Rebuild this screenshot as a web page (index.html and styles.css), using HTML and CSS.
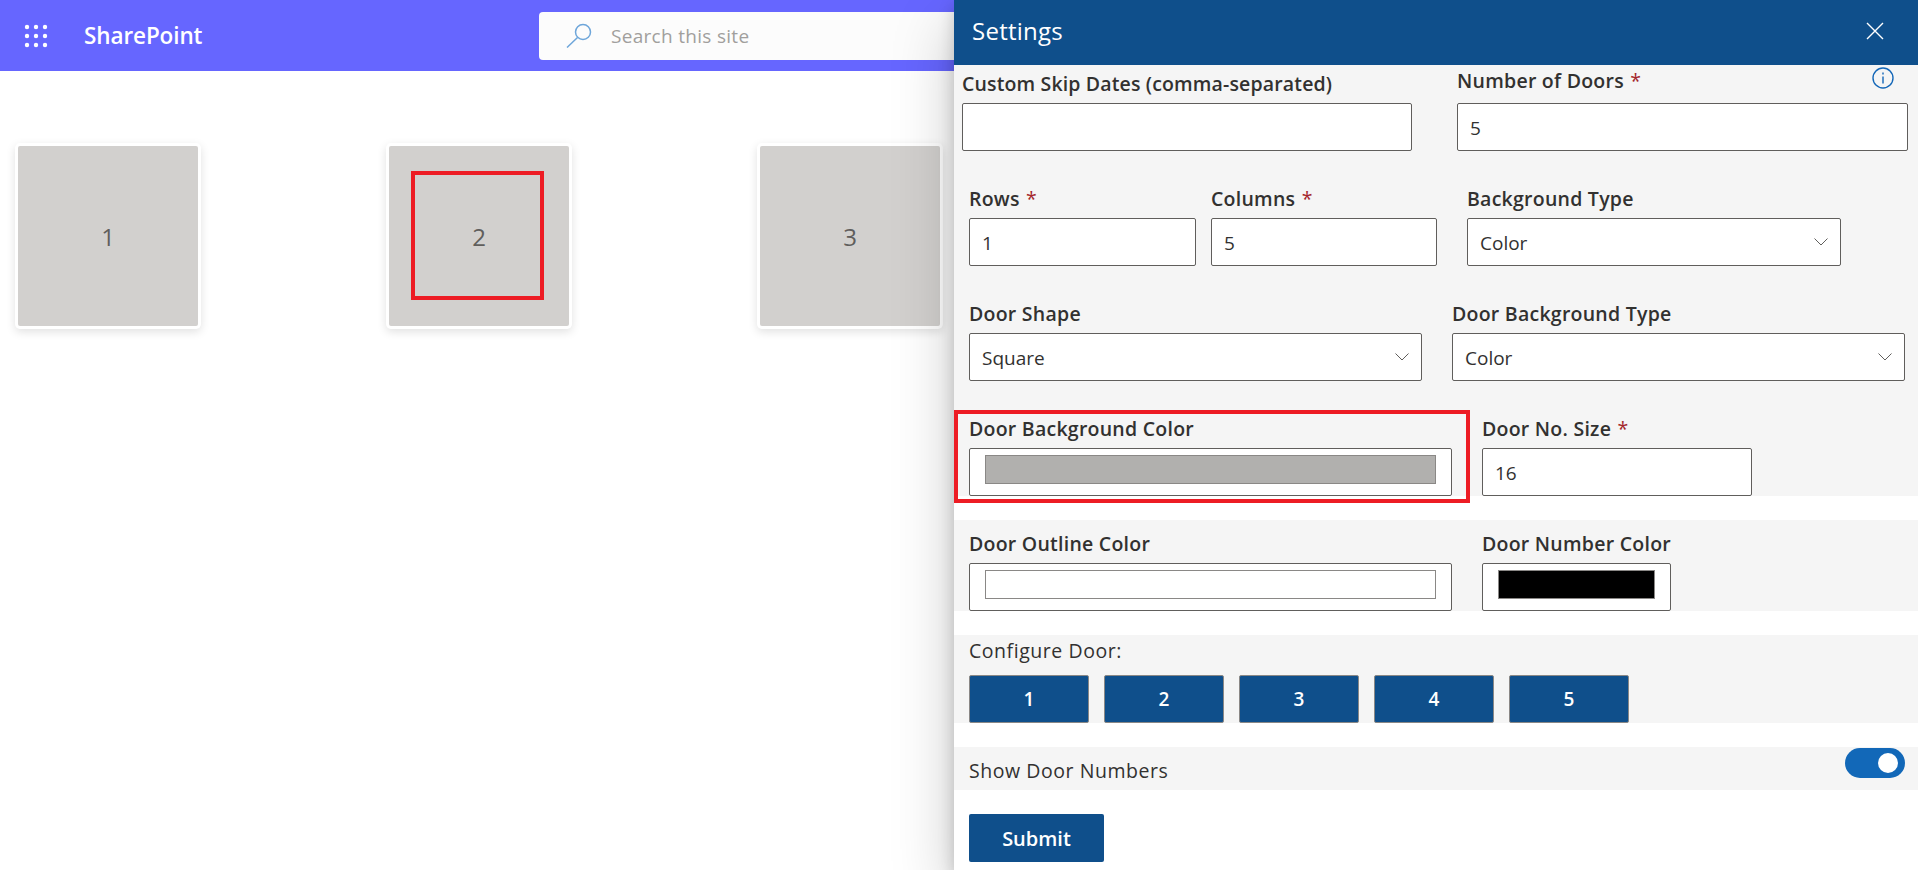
FILE: index.html
```html
<!DOCTYPE html>
<html>
<head>
    <title>SharePoint - Settings</title>
    <link rel="stylesheet" href="styles.css">
</head>
<body>
    <header class="suitebar">
        <svg class="waffle" width="24" height="24" viewBox="0 0 24 24" fill="#fff">
            <circle cx="3" cy="3" r="2.2"/><circle cx="12" cy="3" r="2.2"/><circle cx="21" cy="3" r="2.2"/>
            <circle cx="3" cy="12" r="2.2"/><circle cx="12" cy="12" r="2.2"/><circle cx="21" cy="12" r="2.2"/>
            <circle cx="3" cy="21" r="2.2"/><circle cx="12" cy="21" r="2.2"/><circle cx="21" cy="21" r="2.2"/>
        </svg>
        <span class="brand">SharePoint</span>
        <div class="search">
            <svg class="search-icon" width="26" height="25" viewBox="0 0 26 25" fill="none" stroke="#6ea6da" stroke-width="1.5">
                <circle cx="17" cy="9" r="7.5"/>
                <path d="M11.5 14.5 1 24.5"/>
            </svg>
            <span>Search this site</span>
        </div>
    </header>

    <main class="doors">
        <div class="door">1</div>
        <div class="door door-marked">2</div>
        <div class="door">3</div>
        <div class="door">4</div>
        <div class="door">5</div>
    </main>

    <aside class="panel">
        <div class="panel-head">
            <span class="panel-title">Settings</span>
            <svg width="18" height="18" viewBox="0 0 18 18" stroke="#fff" stroke-width="1.4">
                <path d="M1 1l16 16M17 1 1 17"/>
            </svg>
        </div>

        <section class="block block-first">
            <div class="row row-top">
                <div class="field w-skip">
                    <label class="label label-skip">Custom Skip Dates (comma-separated)</label>
                    <div class="input"></div>
                </div>
                <div class="field w-doors">
                    <label class="label label-up">Number of Doors <span class="req">*</span></label>
                    <div class="input">5</div>
                    <svg class="info" width="22" height="22" viewBox="0 0 22 22" fill="none" stroke="#1467b8" stroke-width="1.4">
                        <circle cx="11" cy="11" r="10"/>
                        <path d="M11 9.5v7M11 5.5v2"/>
                    </svg>
                </div>
            </div>
            <div class="row">
                <div class="field w-rows">
                    <label class="label">Rows <span class="req">*</span></label>
                    <div class="input">1</div>
                </div>
                <div class="field w-cols">
                    <label class="label">Columns <span class="req">*</span></label>
                    <div class="input">5</div>
                </div>
                <div class="field w-bgtype">
                    <label class="label">Background Type</label>
                    <div class="input select">Color
                        <svg width="14" height="8" viewBox="0 0 14 8" fill="none" stroke="#605e5c"><path d="M.5.5 7 7 13.5.5"/></svg>
                    </div>
                </div>
            </div>
            <div class="row">
                <div class="field w-half">
                    <label class="label">Door Shape</label>
                    <div class="input select">Square
                        <svg width="14" height="8" viewBox="0 0 14 8" fill="none" stroke="#605e5c"><path d="M.5.5 7 7 13.5.5"/></svg>
                    </div>
                </div>
                <div class="field w-half">
                    <label class="label">Door Background Type</label>
                    <div class="input select">Color
                        <svg width="14" height="8" viewBox="0 0 14 8" fill="none" stroke="#605e5c"><path d="M.5.5 7 7 13.5.5"/></svg>
                    </div>
                </div>
            </div>
            <div class="row row-wide">
                <div class="field w-color field-marked">
                    <label class="label">Door Background Color</label>
                    <div class="input swatch-box"><div class="swatch swatch-grey"></div></div>
                </div>
                <div class="field w-size">
                    <label class="label">Door No. Size <span class="req">*</span></label>
                    <div class="input">16</div>
                </div>
            </div>
        </section>

        <section class="block block-colors">
            <div class="row row-wide row-flush">
                <div class="field w-color">
                    <label class="label">Door Outline Color</label>
                    <div class="input swatch-box"><div class="swatch swatch-white"></div></div>
                </div>
                <div class="field w-numcolor">
                    <label class="label">Door Number Color</label>
                    <div class="input swatch-box"><div class="swatch swatch-black"></div></div>
                </div>
            </div>
        </section>

        <section class="block block-config">
            <div class="label label-tight">Configure Door:</div>
            <div class="door-btns">
                <button class="door-btn">1</button>
                <button class="door-btn">2</button>
                <button class="door-btn">3</button>
                <button class="door-btn">4</button>
                <button class="door-btn">5</button>
            </div>
        </section>

        <section class="block block-toggle">
            <span class="toggle-label">Show Door Numbers</span>
            <span class="toggle"><span class="knob"></span></span>
        </section>

        <button class="submit">Submit</button>
    </aside>
</body>
</html>
```

FILE: styles.css
```css
*, *::after {
    box-sizing: border-box;
}
html, body {
    height: 100%;
}
body {
    margin: 0;
    overflow: hidden;
    background-color: #fff;
    font-family: "Open Sans", "Noto Sans", Arial, sans-serif;
    color: #323130;
}

/* top bar */
.suitebar {
    display: flex;
    align-items: center;
    height: 71px;
    padding-left: 24px;
    background-color: #6666ff;
}
.waffle {
    flex: none;
}
.brand {
    flex: none;
    width: 117px;
    margin-left: 36px;
    color: #fff;
    font-size: 22.5px;
    font-weight: 600;
    letter-spacing: -0.1px;
    white-space: nowrap;
}
.search {
    display: flex;
    align-items: center;
    width: 840px;
    height: 48px;
    margin-left: 338px;
    padding-left: 27px;
    background-color: #fcfcfc;
    border-radius: 4px;
    color: #a19f9d;
    font-size: 19px;
    letter-spacing: 0.3px;
}
.search-icon {
    margin-right: 19px;
}

/* doors */
.doors {
    display: flex;
    gap: 191px;
    padding: 75px 0 0 18px;
}
.door {
    display: flex;
    flex: none;
    align-items: center;
    justify-content: center;
    position: relative;
    width: 180px;
    height: 180px;
    background-color: #d2d0ce;
    border-radius: 2px;
    box-shadow: 0 0 0 3px #fff, 0 3px 10px 3px rgba(0, 0, 0, 0.12);
    color: #605e5c;
    font-size: 24px;
}
.door-marked::after {
    content: "";
    position: absolute;
    left: 22px;
    top: 25px;
    width: 133px;
    height: 129px;
    border: 4px solid #ed1c24;
}

/* settings panel */
.panel {
    position: absolute;
    top: 0;
    right: 0;
    width: 964px;
    height: 100%;
    background-color: #fff;
    box-shadow: 0 25px 58px rgba(0, 0, 0, 0.22), 0 5px 15px rgba(0, 0, 0, 0.18);
}
.panel-head {
    display: flex;
    align-items: center;
    justify-content: space-between;
    height: 65px;
    padding: 0 34px 4px 18px;
    background-color: #0f4f8b;
    color: #fff;
}
.panel-title {
    font-size: 24px;
    letter-spacing: 0.25px;
}
.block {
    background-color: #f5f5f5;
}
.block-first {
    height: 431px;
    padding: 7px 10px 0 15px;
}
.block-colors {
    height: 91px;
    margin-top: 24px;
    padding: 12px 0 0 15px;
}
.block-config {
    height: 88px;
    margin-top: 24px;
    padding: 4px 0 0 15px;
}
.block-toggle {
    display: flex;
    justify-content: space-between;
    position: relative;
    height: 43px;
    margin-top: 24px;
    padding: 12px 13px 0 15px;
}

.row {
    display: flex;
    margin-top: 36px;
}
.row-top {
    gap: 45px;
    margin: 0 0 0 -7px;
}
.row-wide {
    gap: 30px;
}
.row-flush {
    margin-top: 0;
}
.field {
    position: relative;
    flex: none;
}
.label {
    display: block;
    height: 24px;
    margin-bottom: 7px;
    font-size: 19.5px;
    font-weight: 550;
    line-height: 24px;
    letter-spacing: 0.25px;
    white-space: nowrap;
}
.label-skip {
    letter-spacing: 0.15px;
}
.label-up {
    position: relative;
    top: -3px;
}
.label-tight {
    margin-bottom: 12px;
    font-weight: 500;
    letter-spacing: 0.55px;
}
.req {
    margin-left: 1px;
    color: #a4262c;
    font-weight: 400;
}
.input {
    display: flex;
    align-items: center;
    justify-content: space-between;
    height: 48px;
    padding: 1px 13px 0 12px;
    background-color: #fff;
    border: 1px solid #605e5c;
    border-radius: 2px;
    font-size: 19px;
}
.select svg {
    flex: none;
    margin: -1px -1px 0 0;
}
.swatch-box {
    padding: 0 15px 5px;
}
.swatch {
    width: 100%;
    height: 29px;
    border: 1px solid #8a8886;
}
.swatch-grey {
    background-color: #b1b0ae;
}
.swatch-white {
    background-color: #fff;
}
.swatch-black {
    background-color: #000;
}
.info {
    position: absolute;
    top: -5px;
    right: 14px;
}

.w-skip { width: 450px; }
.w-doors { width: 451px; }
.w-rows { width: 227px; margin-right: 15px; }
.w-cols { width: 226px; margin-right: 30px; }
.w-bgtype { width: 374px; }
.w-half { width: 453px; margin-right: 30px; }
.w-half + .w-half { width: 453px; margin-right: 0; }
.w-color { width: 483px; }
.w-size { width: 270px; }
.w-numcolor { width: 189px; }

/* red marker around the colour field */
.field-marked::after {
    content: "";
    position: absolute;
    left: -15px;
    top: -7px;
    width: 516px;
    height: 93px;
    border: 4px solid #ed1c24;
}

.door-btns {
    display: flex;
    gap: 15px;
}
.door-btn {
    width: 120px;
    height: 48px;
    padding: 0;
    background-color: #0f4f8b;
    border: 1px solid #8a8886;
    border-radius: 2px;
    color: #fff;
    font-family: inherit;
    font-size: 19px;
    font-weight: 600;
    cursor: pointer;
}

.toggle-label {
    font-size: 19.5px;
    font-weight: 500;
    line-height: 24px;
    letter-spacing: 0.55px;
}
.toggle {
    display: flex;
    align-items: center;
    justify-content: flex-end;
    position: absolute;
    top: 1px;
    right: 13px;
    width: 60px;
    height: 30px;
    padding-right: 7px;
    background-color: #1268b8;
    border-radius: 15px;
}
.knob {
    width: 20px;
    height: 20px;
    background-color: #fff;
    border-radius: 50%;
}

.submit {
    display: block;
    width: 135px;
    height: 48px;
    margin: 24px 0 0 15px;
    background-color: #0f4f8b;
    border: none;
    border-radius: 2px;
    color: #fff;
    font-family: inherit;
    font-size: 20px;
    font-weight: 600;
    cursor: pointer;
}
```
